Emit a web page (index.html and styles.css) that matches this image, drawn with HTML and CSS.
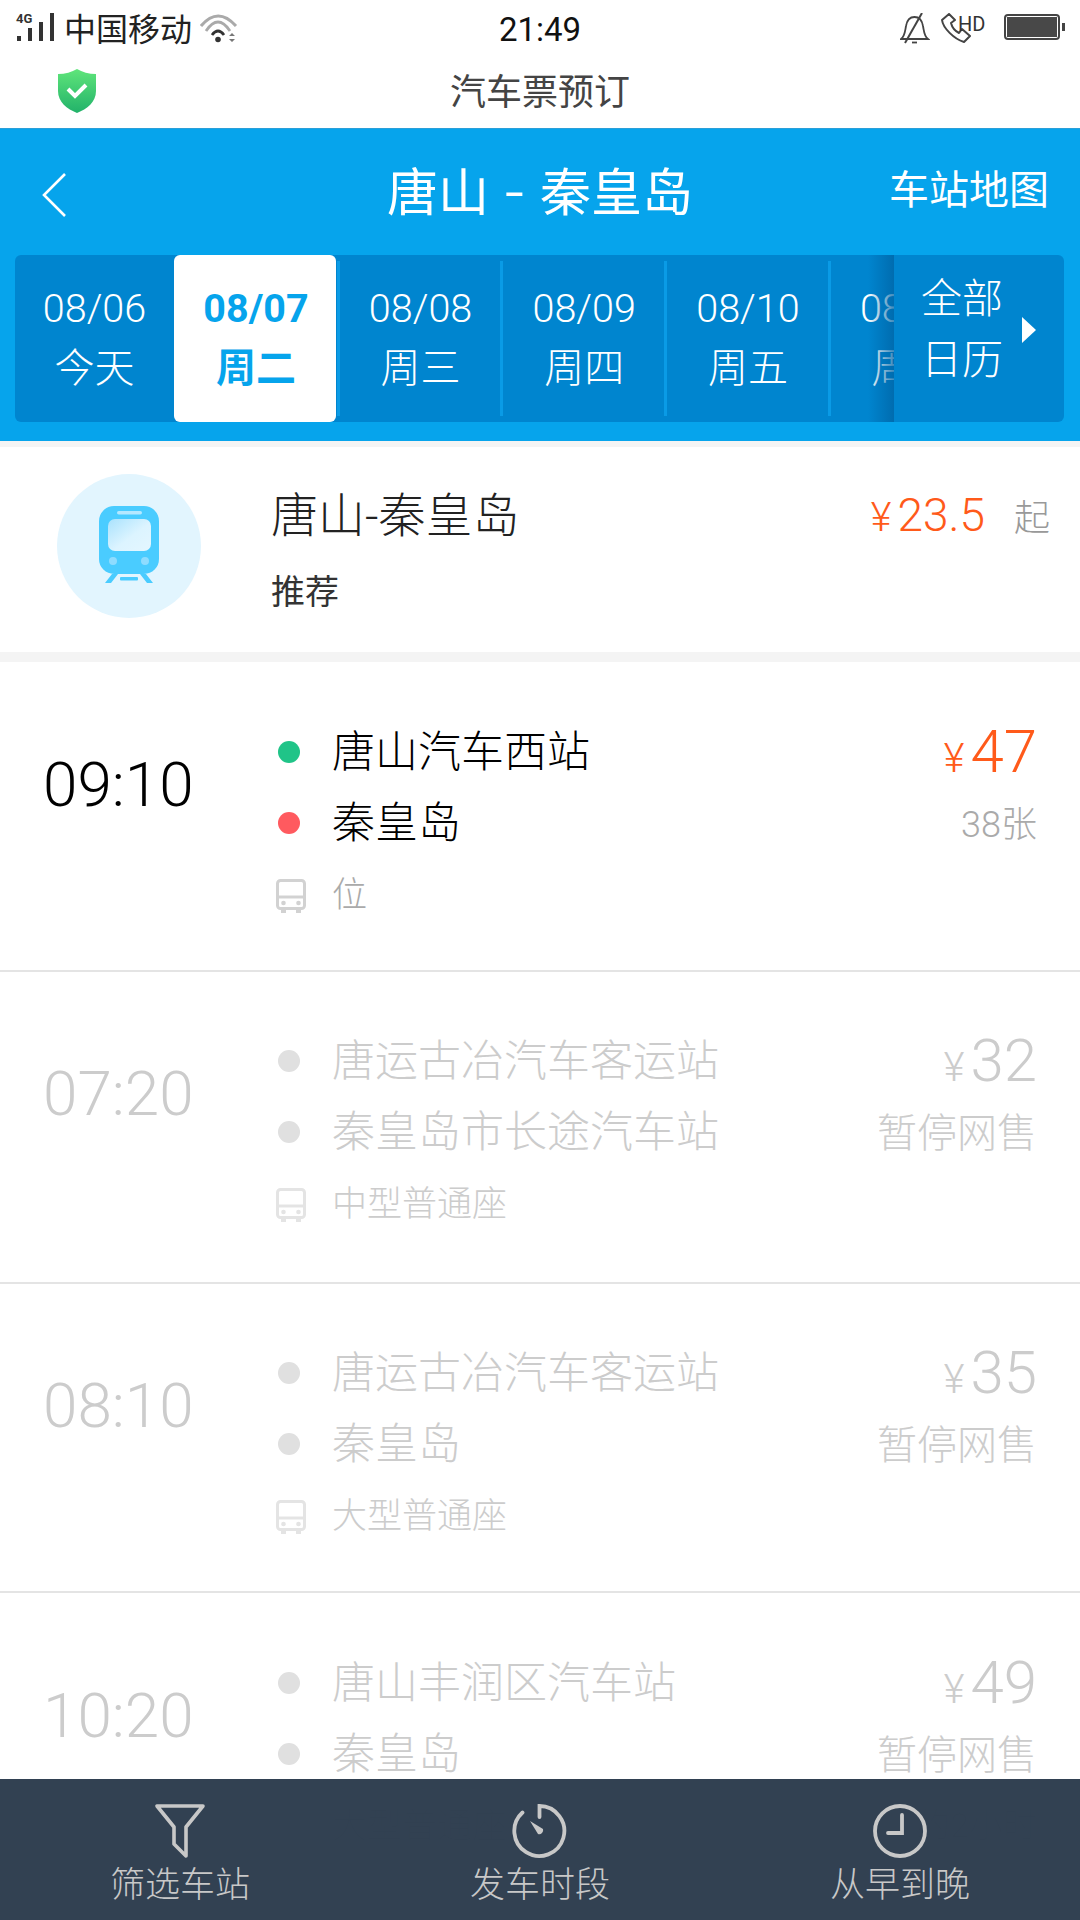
FILE: index.html
```html
<!DOCTYPE html>
<html lang="zh">
<head>
<meta charset="utf-8">
<title>汽车票预订</title>
<link rel="stylesheet" href="styles.css">
</head>
<body>
<div class="page">
  <div class="status">
    <div class="status-left">
      <span class="signal">
        <svg width="40" height="30" viewBox="0 0 40 30"><g fill="#333"><rect x="1" y="23" width="4" height="5"/><rect x="12" y="15" width="4" height="13"/><rect x="23" y="9" width="4" height="19"/><rect x="34" y="0" width="4" height="28"/></g></svg>
        <span class="net">4G</span>
      </span>
      <span class="carrier">中国移动</span>
      <svg class="wifi" width="38" height="30" viewBox="0 0 38 30" fill="none"><path d="M1 12Q18 -8 36 12" stroke="#aaa" stroke-width="3"/><path d="M6 17Q18 -1 30 17" stroke="#aaa" stroke-width="2.800"/><path d="M12 21Q18 13 24 21" stroke="#333" stroke-width="2.800"/><circle cx="18" cy="25.500" r="2.800" fill="#333"/><path d="M29 22l3-3 3 3zM29 25l3 3 3-3z" fill="#777"/></svg>
    </div>
    <div class="clock">21:49</div>
    <div class="status-right">
      <svg width="30" height="34" viewBox="0 0 30 34" fill="none" stroke="#444" stroke-width="1.800"><path d="M1 26C5 23 5 18 6 13C7 7 10 4 14.500 4C19 4 22 7 23 13C24 18 24 23 28 26Z"/><path d="M22 0L5 30" stroke-width="2"/><path d="M12 29.500h5"/></svg>
      <span class="hd">
        <svg width="30" height="34" viewBox="0 0 30 34" fill="none" stroke="#444" stroke-width="2" stroke-linejoin="round"><path d="M8 1L1 7C2 15 13 26 23 29L29 23L21 16L18 20C14 18 11 14 10 10L14 7Z"/></svg>
        <span class="hd-label">HD</span>
      </span>
      <span class="battery"><span class="battery-fill"></span></span>
    </div>
  </div>

  <div class="webbar">
    <svg class="shield" width="38" height="44" viewBox="0 0 38 44"><defs><linearGradient id="sg" x1="0" y1="0" x2="0" y2="1"><stop offset="0" stop-color="#5fe57a"/><stop offset="1" stop-color="#22b26a"/></linearGradient></defs><path d="M19 0C24 3 31 5 38 5V22C38 33 29 40 19 44C9 40 0 33 0 22V5C7 5 14 3 19 0Z" fill="url(#sg)"/><path d="M10 20L17 27L28 16" fill="none" stroke="#fff" stroke-width="4"/></svg>
    <div class="webtitle">汽车票预订</div>
  </div>

  <header class="header">
    <div class="nav">
      <div class="back"><svg width="24" height="44" viewBox="0 0 24 44" fill="none" stroke="#fff" stroke-width="2.600"><path d="M23 1L2 22L23 43"/></svg></div>
      <div class="route">唐山 <span class="route-dash">-</span> 秦皇岛</div>
      <div class="map-link">车站地图</div>
    </div>
    <div class="strip">
      <div class="dates">
        <div class="date date-first"><div class="date-num">08/06</div><div>今天</div></div>
        <div class="date date-on"><div class="date-num">08/07</div><div>周二</div></div>
        <div class="date"><div class="date-num">08/08</div><div>周三</div></div>
        <div class="date"><div class="date-num">08/09</div><div>周四</div></div>
        <div class="date"><div class="date-num">08/10</div><div>周五</div></div>
        <div class="date"><div class="date-num">08/11</div><div>周六</div></div>
      </div>
      <div class="calendar">
        <div class="calendar-text"><div>全部</div><div>日历</div></div>
        <span class="calendar-arrow"></span>
      </div>
    </div>
  </header>

  <section class="reco">
    <div class="reco-badge">
      <svg width="60" height="77" viewBox="0 0 60 77"><defs><linearGradient id="wg" x1="0" y1="0" x2="1" y2="1"><stop offset="0" stop-color="#a9e2fd"/><stop offset=".55" stop-color="#dcf4ff"/><stop offset="1" stop-color="#e4f6ff"/></linearGradient></defs><rect width="60" height="68" rx="15" fill="#4accff"/><rect x="9" y="13" width="43" height="32" rx="7" fill="url(#wg)"/><rect x="18" y="5" width="25" height="3.500" rx="1.700" fill="#b5e8ff"/><circle cx="14" cy="55" r="4" fill="#8edcff"/><circle cx="46" cy="55" r="4" fill="#8edcff"/><path d="M6 77L13 68H19L12 77ZM54 77L47 68H41L48 77Z" fill="#4accff"/><rect x="21" y="71" width="18" height="3.500" rx="1" fill="#4accff"/></svg>
    </div>
    <div class="reco-text">
      <div class="reco-title">唐山-秦皇岛</div>
      <div class="reco-tag">推荐</div>
    </div>
    <div class="reco-price"><span class="yen">¥</span><span class="reco-num">23.5</span><span class="reco-from">起</span></div>
  </section>

  <main class="list">
    <article class="row">
      <div class="time">09:10</div>
      <div class="line"><span class="dot dot-from"></span><span class="station">唐山汽车西站</span></div>
      <div class="price"><span class="yen">¥</span><span class="amount">47</span></div>
      <div class="line"><span class="dot dot-to"></span><span class="station">秦皇岛</span></div>
      <div class="note">38张</div>
      <div class="line line-seat"><svg class="bus" viewBox="0 0 30 34" fill="none"><rect x="1.500" y="1.500" width="27" height="28" rx="3" stroke="currentColor" stroke-width="3"/><path d="M2 18H28" stroke="currentColor" stroke-width="3"/><circle cx="7.500" cy="24" r="2.300" fill="currentColor"/><circle cx="22.500" cy="24" r="2.300" fill="currentColor"/><path d="M5 30h5v4H5zM20 30h5v4h-5z" fill="currentColor"/></svg><span class="seat">位</span></div>
    </article>
    <article class="row row-off row-b">
      <div class="time">07:20</div>
      <div class="line"><span class="dot"></span><span class="station">唐运古冶汽车客运站</span></div>
      <div class="price"><span class="yen">¥</span><span class="amount">32</span></div>
      <div class="line"><span class="dot"></span><span class="station">秦皇岛市长途汽车站</span></div>
      <div class="note">暂停网售</div>
      <div class="line line-seat"><svg class="bus" viewBox="0 0 30 34" fill="none"><rect x="1.500" y="1.500" width="27" height="28" rx="3" stroke="currentColor" stroke-width="3"/><path d="M2 18H28" stroke="currentColor" stroke-width="3"/><circle cx="7.500" cy="24" r="2.300" fill="currentColor"/><circle cx="22.500" cy="24" r="2.300" fill="currentColor"/><path d="M5 30h5v4H5zM20 30h5v4h-5z" fill="currentColor"/></svg><span class="seat">中型普通座</span></div>
    </article>
    <article class="row row-off row-c">
      <div class="time">08:10</div>
      <div class="line"><span class="dot"></span><span class="station">唐运古冶汽车客运站</span></div>
      <div class="price"><span class="yen">¥</span><span class="amount">35</span></div>
      <div class="line"><span class="dot"></span><span class="station">秦皇岛</span></div>
      <div class="note">暂停网售</div>
      <div class="line line-seat"><svg class="bus" viewBox="0 0 30 34" fill="none"><rect x="1.500" y="1.500" width="27" height="28" rx="3" stroke="currentColor" stroke-width="3"/><path d="M2 18H28" stroke="currentColor" stroke-width="3"/><circle cx="7.500" cy="24" r="2.300" fill="currentColor"/><circle cx="22.500" cy="24" r="2.300" fill="currentColor"/><path d="M5 30h5v4H5zM20 30h5v4h-5z" fill="currentColor"/></svg><span class="seat">大型普通座</span></div>
    </article>
    <article class="row row-off">
      <div class="time">10:20</div>
      <div class="line"><span class="dot"></span><span class="station">唐山丰润区汽车站</span></div>
      <div class="price"><span class="yen">¥</span><span class="amount">49</span></div>
      <div class="line"><span class="dot"></span><span class="station">秦皇岛</span></div>
      <div class="note">暂停网售</div>
      <div class="line line-seat"><svg class="bus" viewBox="0 0 30 34" fill="none"><rect x="1.500" y="1.500" width="27" height="28" rx="3" stroke="currentColor" stroke-width="3"/><path d="M2 18H28" stroke="currentColor" stroke-width="3"/><circle cx="7.500" cy="24" r="2.300" fill="currentColor"/><circle cx="22.500" cy="24" r="2.300" fill="currentColor"/><path d="M5 30h5v4H5zM20 30h5v4h-5z" fill="currentColor"/></svg><span class="seat">大型普通座</span></div>
      <div class="duration">约2小时</div>
    </article>
  </main>

  <nav class="tabs">
    <div class="tab">
      <svg width="52" height="56" viewBox="0 0 52 56" fill="none" stroke="#c8c8c8" stroke-width="3.600" stroke-linejoin="round"><path d="M3 3H49L32 24V53L20 41V24Z"/></svg>
      <span class="tab-label">筛选车站</span>
    </div>
    <div class="tab">
      <svg width="56" height="56" viewBox="0 0 56 56" fill="none" stroke="#c8c8c8" stroke-width="3.800" stroke-linecap="round"><path d="M27.500 14V3A25 25 0 1 1 10.500 9.500"/><path d="M18 18L31 26A4 4 0 0 1 26 31Z" fill="#c8c8c8" stroke="none"/></svg>
      <span class="tab-label">发车时段</span>
    </div>
    <div class="tab">
      <svg width="56" height="56" viewBox="0 0 56 56" fill="none" stroke="#c8c8c8" stroke-width="3.800" stroke-linecap="round"><circle cx="28" cy="28" r="25"/><path d="M30 12V30H16"/></svg>
      <span class="tab-label">从早到晚</span>
    </div>
  </nav>
</div>
</body>
</html>
```
FILE: styles.css
```css
* { box-sizing: border-box; }
html, body { margin: 0; padding: 0; }
body { background: #fff; font-family: Roboto, "Noto Sans CJK SC", sans-serif; color: #222; }
.page { position: relative; width: 1080px; height: 1920px; overflow: hidden; background: #fff; }

.status { height: 60px; display: grid; grid-template-columns: 1fr auto 1fr; align-items: center; padding: 0 16px; }
.status-left { display: flex; align-items: center; }
.signal { position: relative; width: 40px; height: 30px; margin-top: -4px; display: block; }
.signal svg { display: block; }
.net { position: absolute; left: 0; top: 0; font-size: 13px; font-weight: 700; line-height: 12px; color: #333; }
.carrier { font-size: 32px; line-height: 40px; margin-left: 8px; color: #222; }
.wifi { margin-left: 8px; margin-top: -2px; }
.clock { font-size: 33px; line-height: 40px; color: #111; }
.status-right { display: flex; align-items: center; justify-content: flex-end; margin-right: 4px; }
.hd { position: relative; width: 44px; height: 34px; margin-left: 11px; display: block; }
.hd-label { position: absolute; left: 17px; top: 1px; font-size: 20px; line-height: 20px; color: #333; }
.battery { position: relative; display: block; width: 56px; height: 26px; margin-left: 19px; margin-top: -7px; border: 2px solid #444; border-radius: 4px; padding: 1px; }
.battery::after { content: ""; position: absolute; right: -7px; top: 7px; width: 3px; height: 8px; background: #444; }
.battery-fill { display: block; width: 100%; height: 100%; background: #484848; }

.webbar { height: 68px; display: flex; align-items: center; position: relative; justify-content: center; }
.shield { position: absolute; left: 58px; top: 9px; }
.webtitle { font-size: 36px; color: #444; line-height: 60px; margin-top: -2px; }

.header { background: #06a4ec; height: 313px; border-top: 1px solid #2b9fd8; }
.nav { height: 126px; display: grid; grid-template-columns: 1fr auto 1fr; align-items: center; padding: 0 31px; }
.back { margin: 5px 0 0 11px; }
.back svg { display: block; }
.route { font-size: 51px; line-height: 70px; color: #fff; word-spacing: 3px; padding-top: 3px; }
.route-dash { font-size: 68px; line-height: 0; font-weight: 300; vertical-align: -5px; }
.map-link { font-size: 40px; line-height: 50px; color: #fff; text-align: right; margin-top: -3px; }

.strip { height: 167px; margin: 0 16px 0 15px; display: flex; background: #0085cf; border-radius: 6px; overflow: hidden; }
.dates { position: relative; display: flex; flex: 1; overflow: hidden; min-width: 0; }
.dates::after { content: ""; position: absolute; right: 0; top: 0; bottom: 0; width: 26px; background: linear-gradient(to right, rgba(0, 100, 165, 0), rgba(0, 100, 165, .75)); }
.date { position: relative; flex: 0 0 163.7px; padding: 24px 0 0 2px; font-size: 40px; line-height: 60px; text-align: center; color: #fff; font-weight: 300; }
.date::after { content: ""; position: absolute; right: -2px; top: 6px; bottom: 6px; width: 3px; background: #0a9be6; }
.date-first { flex-basis: 159px; padding-left: 0; }
.date-first::after { display: none; }
.date-num { font-family: Roboto, sans-serif; font-size: 39.5px; }
.date-on { flex-basis: 162px; margin-right: 1.7px; background: #fff; color: #06a4ec; font-weight: 700; border-radius: 6px; }
.date-on::after { right: -3.7px; }
.calendar { flex: 0 0 170px; display: flex; align-items: center; padding: 0 0 17px 27px; }
.calendar-text { font-size: 41px; line-height: 61px; color: #fff; font-weight: 300; }
.calendar-arrow { margin-left: 19px; width: 0; height: 0; border-left: 14px solid #fff; border-top: 13px solid transparent; border-bottom: 13px solid transparent; }

.reco { margin-top: 6px; height: 205px; background: #fff; display: flex; align-items: center; padding: 0 30px 0 57px; box-shadow: 0 -6px 0 #f4f4f4, 0 10px 0 #f4f4f4; }
.reco-badge { width: 144px; height: 144px; margin-bottom: 7px; padding-bottom: 3px; border-radius: 50%; background: #e2f5fe; display: flex; align-items: center; justify-content: center; }
.reco-text { margin-left: 70px; flex: 1; }
.reco-title { font-size: 47px; line-height: 60px; color: #222; font-weight: 300; padding-top: 1px; }
.reco-tag { font-size: 34px; line-height: 46px; margin-top: 23px; color: #333; }
.reco-price { align-self: flex-start; margin-top: 42px; display: flex; align-items: baseline; color: #ff5a1a; }
.reco-num { font-size: 46px; line-height: 50px; font-weight: 300; }
.reco-from { font-size: 36px; color: #999; margin-left: 29px; font-weight: 300; }

.list { margin-top: 10px; }
.row { height: 310px; padding: 54px 43px 0; border-bottom: 2px solid #e4e4e4; display: grid; grid-template-columns: 235px 1fr auto; grid-auto-rows: 71px; align-items: center; color: #000; }
.row-b { height: 312px; padding-top: 53px; }
.row-c { height: 309px; padding-top: 53px; }
.time { grid-row: 1 / span 2; grid-column: 1; font-size: 62px; line-height: 70px; font-weight: 300; padding-bottom: 4px; }
.line { grid-column: 2; display: flex; align-items: center; }
.line-seat { margin-top: 4px; }
.dot { width: 22px; height: 22px; border-radius: 50%; background: #e0e0e0; flex: none; }
.dot-from { background: #20c488; }
.dot-to { background: #ff5a5f; }
.station { margin-left: 32px; font-size: 43px; line-height: 60px; font-weight: 300; }
.bus { width: 30px; height: 34px; flex: none; margin-left: -2px; color: #d2d2d2; }
.seat { margin-left: 26px; font-size: 35px; line-height: 50px; color: #aaa; font-weight: 300; }
.price { grid-column: 3; justify-self: end; display: flex; align-items: baseline; color: #ff5a1a; }
.yen { font-size: 40px; margin-right: 6px; font-weight: 300; }
.amount { font-size: 60px; line-height: 71px; font-weight: 300; }
.note { grid-column: 3; justify-self: end; margin-top: 4px; font-size: 36px; color: #aaa; font-weight: 300; line-height: 50px; }
.duration { grid-column: 3; grid-row: 3; justify-self: end; font-size: 34px; color: #ccc; font-weight: 300; line-height: 50px; }
.row-off { color: #ccc; }
.row-off .price { color: #ccc; }
.row-off .note { font-size: 40px; color: #ccc; }
.row-off .seat { color: #ccc; }
.row-off .bus { color: #e4e4e4; }

.tabs { position: absolute; left: 0; right: 0; bottom: 0; height: 141px; background: rgba(47, 62, 79, .985); display: grid; grid-template-columns: repeat(3, 1fr); }
.tab { display: flex; flex-direction: column; align-items: center; padding-top: 24px; color: #c8c8c8; }
.tab svg { display: block; }
.tab-label { margin-top: 5px; font-size: 35px; line-height: 44px; font-weight: 300; }
```
